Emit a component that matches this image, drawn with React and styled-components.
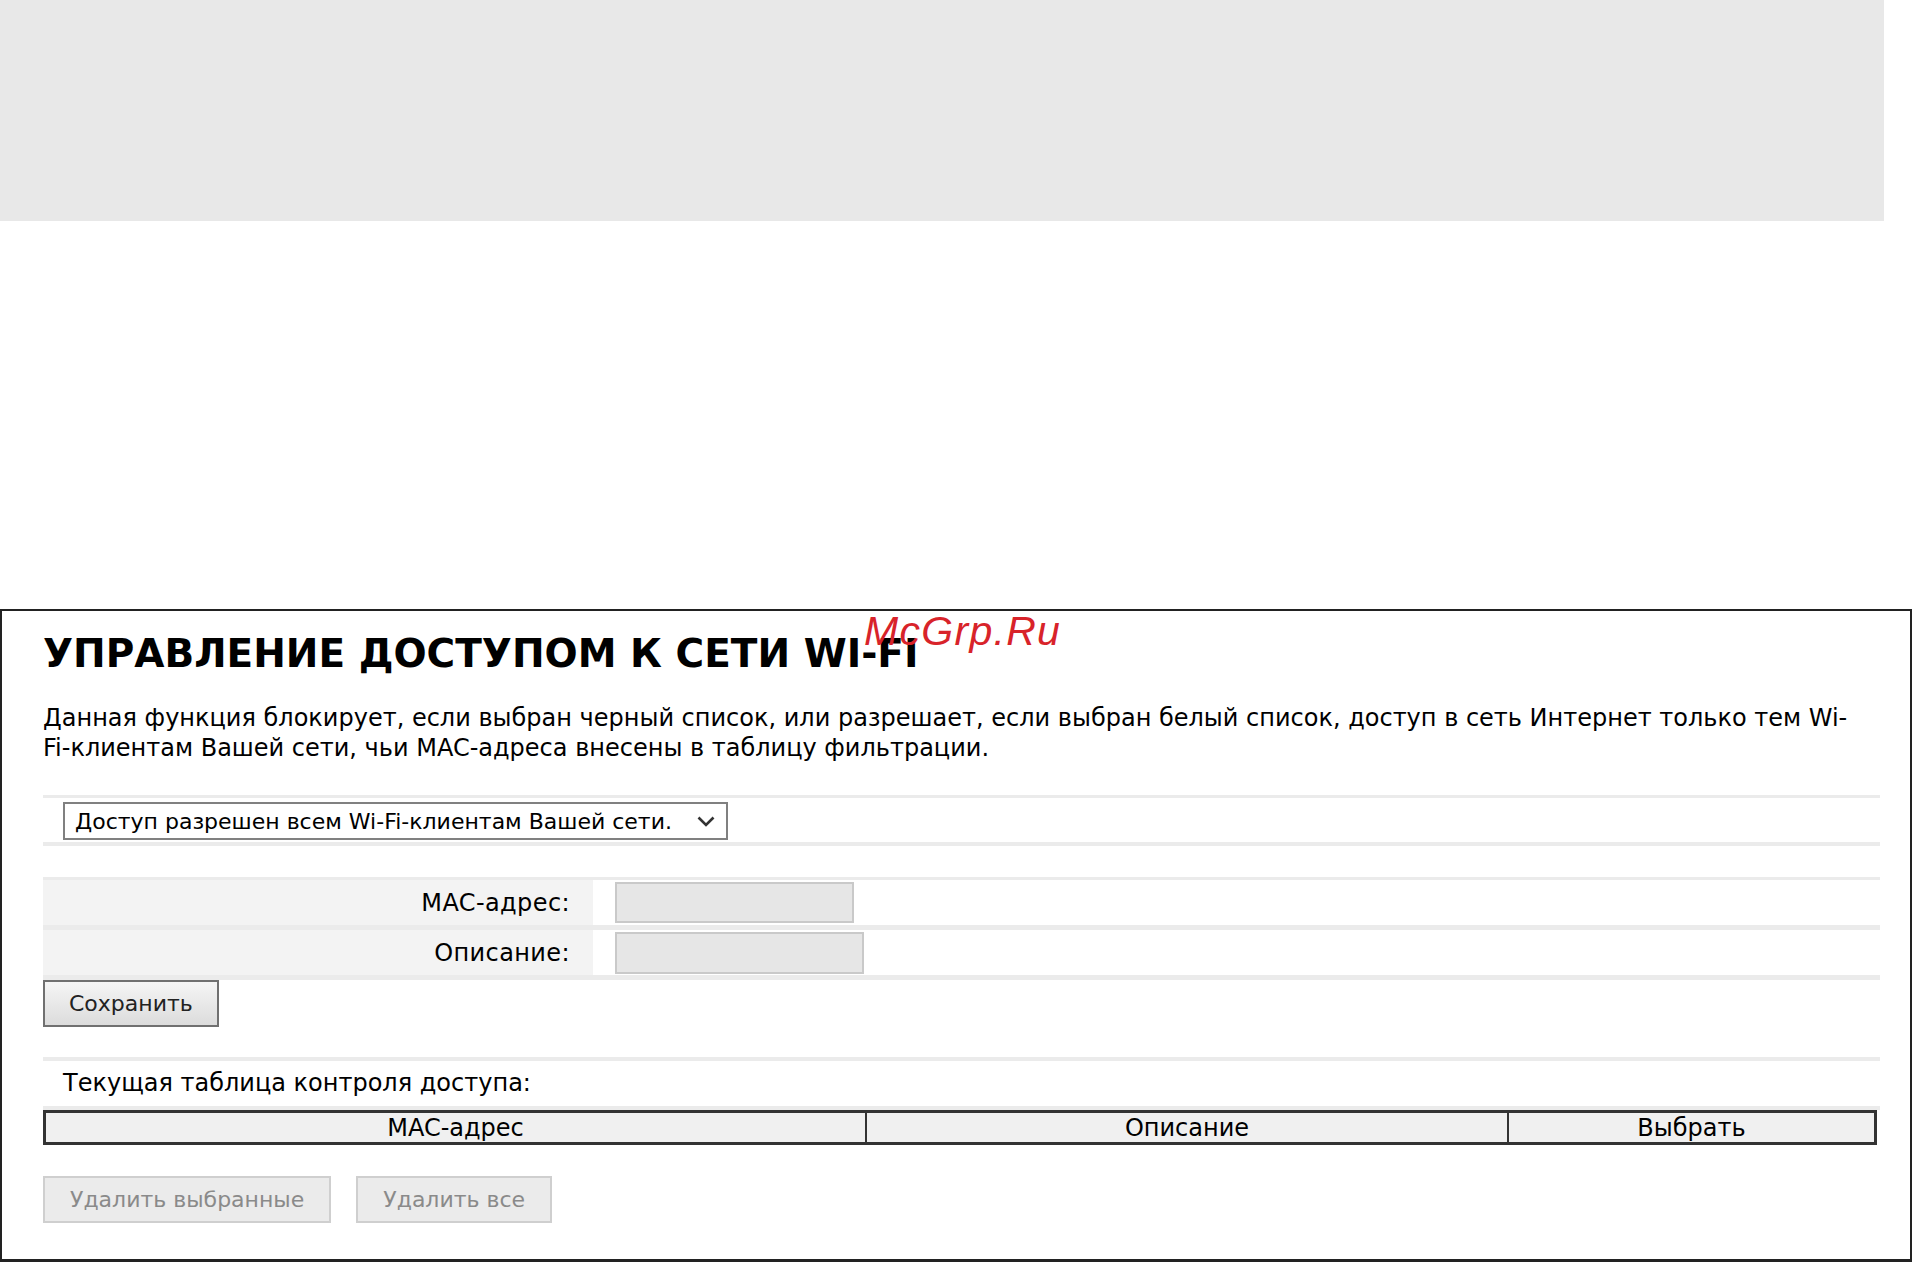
import React from "react";
import styled, { createGlobalStyle } from "styled-components";

const GlobalStyle = createGlobalStyle`
  html, body {
    margin: 0;
    padding: 0;
    background: #fff;
  }
  body {
    font-family: "DejaVu Sans", "Liberation Sans", sans-serif;
    color: #000;
  }
  * {
    box-sizing: border-box;
  }
`;

const TopBar = styled.div`
  width: 1884px;
  height: 221px;
  background: #e8e8e8;
`;

const Panel = styled.section`
  position: relative;
  width: 1912px;
  margin-top: 388px;
  border: 2px solid #222;
  border-bottom-width: 3px;
  padding: 19px 30px 36px 41px;
`;

const Watermark = styled.span`
  position: absolute;
  top: 0;
  left: 862px;
  font-family: "Liberation Sans", sans-serif;
  font-style: italic;
  font-size: 41px;
  line-height: 1;
  letter-spacing: 1.3px;
  color: #d8232a;
`;

const Title = styled.h1`
  margin: 0;
  font-size: 39px;
  line-height: 48px;
  font-weight: 700;
  color: #000;
`;

const Intro = styled.p`
  margin: 25px 0 0;
  font-size: 24px;
  line-height: 30px;
`;

const SelectSection = styled.div`
  margin-top: 32px;
  border-top: 3px solid #ebebeb;
  border-bottom: 4px solid #ebebeb;
  padding: 4px 0 2px 20px;
`;

const SelectBox = styled.div`
  width: 665px;
  height: 38px;
  border: 2px solid #808080;
  background: #fff;
  padding: 0 11px 0 10px;
  display: flex;
  align-items: center;
  justify-content: space-between;
  font-size: 22px;
`;

const FormTable = styled.div`
  margin-top: 31px;
  border-top: 3px solid #ebebeb;
`;

const FormRow = styled.div`
  display: flex;
  height: 50px;
  border-bottom: 5px solid #ebebeb;
`;

const LabelCell = styled.div`
  width: 550px;
  background: #f3f3f3;
  display: flex;
  align-items: center;
  justify-content: flex-end;
  padding-right: 23px;
  font-size: 24px;
  letter-spacing: 0.4px;
`;

const ValueCell = styled.div`
  display: flex;
  align-items: center;
  padding-left: 22px;
`;

const TextInput = styled.div`
  width: ${(p) => p.$w}px;
  height: ${(p) => p.$h}px;
  background: #e6e6e6;
  border: 2px solid #c9c9c9;
`;

const Button = styled.button`
  height: 47px;
  padding: 0 ${(p) => (p.$muted ? 25 : 24)}px;
  font-family: "DejaVu Sans", "Liberation Sans", sans-serif;
  font-size: 22px;
  cursor: pointer;
  color: ${(p) => (p.$muted ? "#8a8a8a" : "#222")};
  border: 2px solid ${(p) => (p.$muted ? "#cfcfcf" : "#707070")};
  background: ${(p) =>
    p.$muted ? "#ebebeb" : "linear-gradient(#f5f5f5, #dcdcdc)"};
`;

const CaptionSection = styled.div`
  margin-top: 30px;
  border-top: 4px solid #ebebeb;
  border-bottom: 4px solid #ebebeb;
  padding: 8px 0 9px 20px;
  font-size: 24px;
  line-height: 28px;
`;

const AclHead = styled.div`
  display: grid;
  grid-template-columns: 819px 642px 1fr;
  width: 1834px;
  height: 35px;
  border: 3px solid #333;
  background: #f0f0f0;
`;

const HeadCell = styled.div`
  display: flex;
  align-items: center;
  justify-content: center;
  font-size: 24px;
  border-left: ${(p) => (p.$first ? "none" : "2px solid #333")};
`;

const ButtonRow = styled.div`
  display: flex;
  gap: 25px;
  margin-top: 31px;
`;

const Chevron = () => (
  <svg width="18" height="11" viewBox="0 0 18 11">
    <path d="M1.5 1.5 L9 9 L16.5 1.5" fill="none" stroke="#333" strokeWidth="2.6" />
  </svg>
);

export default function App() {
  return (
    <>
      <GlobalStyle />
      <TopBar />
      <Panel>
        <Watermark>McGrp.Ru</Watermark>
        <Title>УПРАВЛЕНИЕ ДОСТУПОМ К СЕТИ WI-FI</Title>
        <Intro>
          Данная функция блокирует, если выбран черный список, или разрешает,
          если выбран белый список, доступ в сеть Интернет только тем Wi-
          <br />
          Fi-клиентам Вашей сети, чьи MAC-адреса внесены в таблицу фильтрации.
        </Intro>

        <SelectSection>
          <SelectBox>
            <span>Доступ разрешен всем Wi-Fi-клиентам Вашей сети.</span>
            <Chevron />
          </SelectBox>
        </SelectSection>

        <FormTable>
          <FormRow>
            <LabelCell>MAC-адрес:</LabelCell>
            <ValueCell>
              <TextInput $w={239} $h={41} />
            </ValueCell>
          </FormRow>
          <FormRow>
            <LabelCell>Описание:</LabelCell>
            <ValueCell>
              <TextInput $w={249} $h={42} />
            </ValueCell>
          </FormRow>
        </FormTable>
        <Button>Сохранить</Button>

        <CaptionSection>Текущая таблица контроля доступа:</CaptionSection>
        <AclHead>
          <HeadCell $first>MAC-адрес</HeadCell>
          <HeadCell>Описание</HeadCell>
          <HeadCell>Выбрать</HeadCell>
        </AclHead>

        <ButtonRow>
          <Button $muted>Удалить выбранные</Button>
          <Button $muted>Удалить все</Button>
        </ButtonRow>
      </Panel>
    </>
  );
}
